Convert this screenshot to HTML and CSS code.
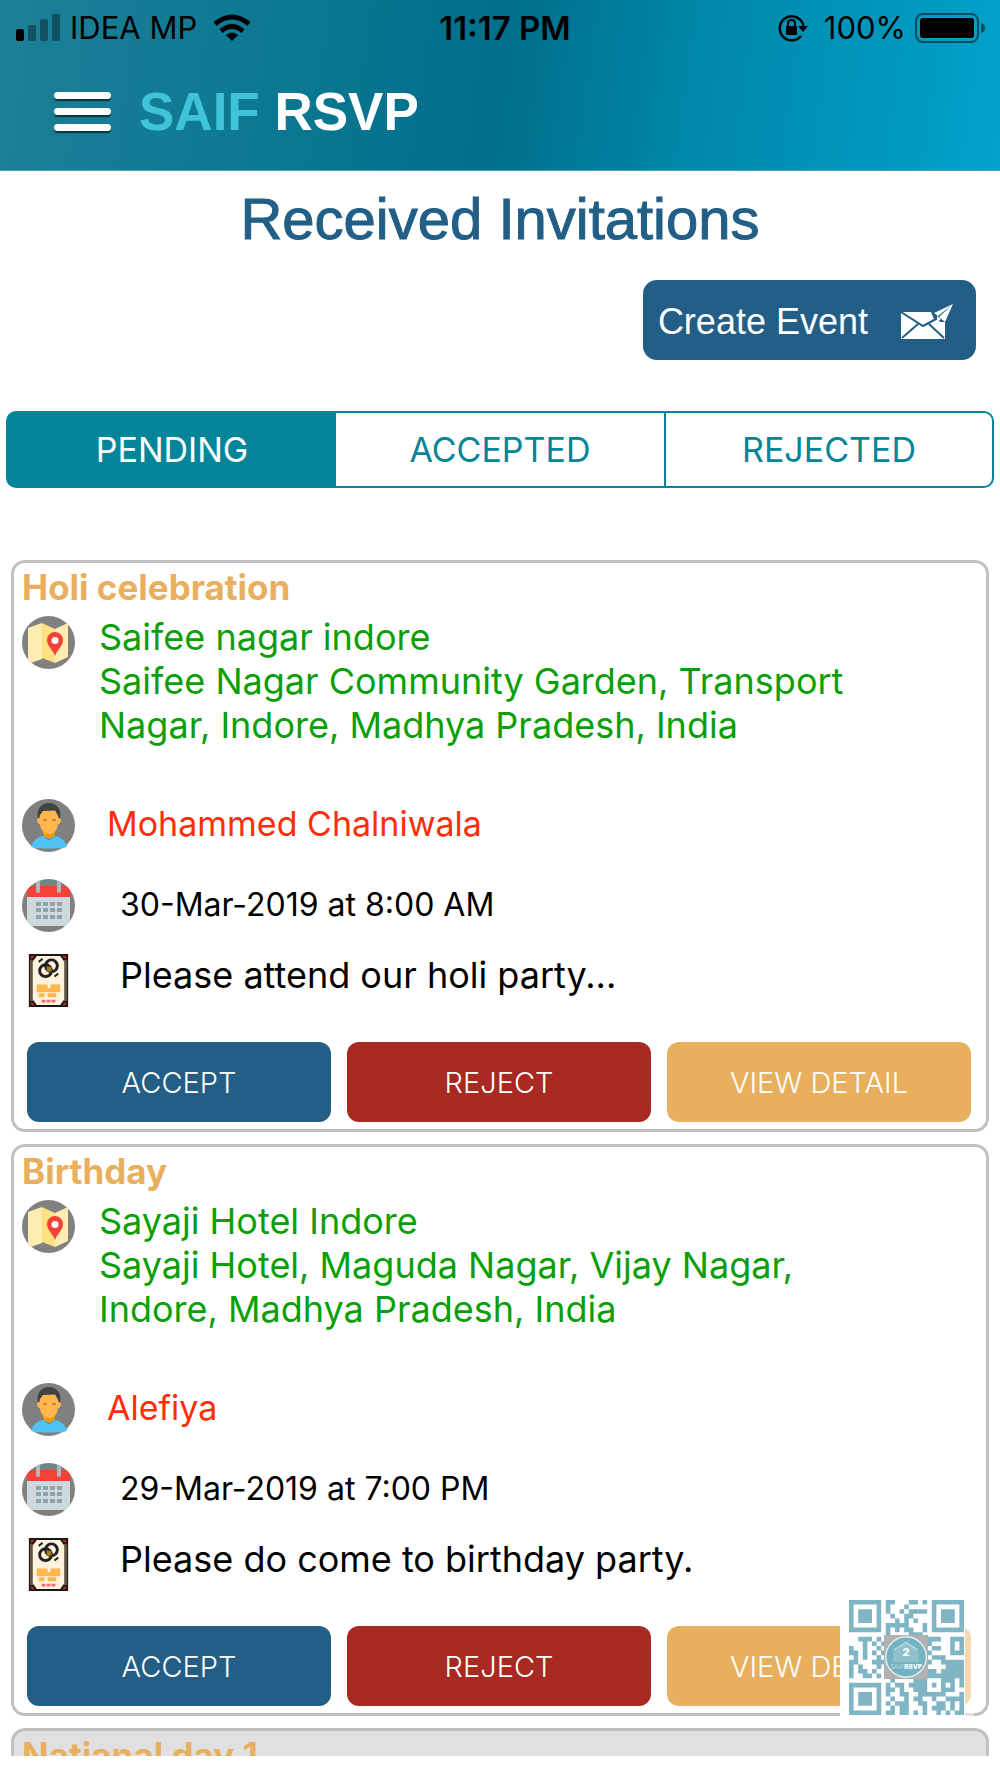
FILE: index.html
```html
<!DOCTYPE html>
<html lang="en">
<head>
<meta charset="UTF-8" />
<meta name="viewport" content="width=device-width, initial-scale=1" />
<title>SAIF RSVP</title>
<link rel="stylesheet" href="styles.css">
</head>
<body>
  <!-- Shared icons -->
  <svg class="sprite" aria-hidden="true">
    <symbol id="icon-map" viewBox="0 0 53 53">
      <clipPath id="map-clip"><circle cx="26.500" cy="26.500" r="26.500" /></clipPath>
      <g clip-path="url(#map-clip)">
        <rect width="53" height="53" fill="#808080" />
        <path d="M6 12l14-5v36L6 48z" fill="#ffecb3" />
        <path d="M20 7l13 6v34l-13-5z" fill="#ffe082" />
        <path d="M33 13l13-6v34l-13 6z" fill="#ffecb3" />
        <path d="M33 40c-2-6-8-10-8-16a8 8 0 0 1 16 0c0 6-6 10-8 16z" fill="#f44336" />
        <circle cx="33" cy="24.500" r="3.500" fill="#fff" />
      </g>
    </symbol>
    <symbol id="icon-person" viewBox="0 0 53 53">
      <circle cx="26.500" cy="26.500" r="26.500" fill="#808080" />
      <path d="M9 48c2-8 9-12 18-12s16 4 18 12c-5 2-31 2-36 0z" fill="#4fc3f7" />
      <path d="M19 36l8 5 8-5-3-2H22z" fill="#0288d1" />
      <path d="M21 30h12v7l-6 3-6-3z" fill="#ff9800" />
      <path d="M16 19h22c2 3 0 6-2 6 0 5-4 10-9 10s-9-5-9-10c-2 0-4-3-2-6z" fill="#ffb74d" />
      <path d="M18 20V12h18v8z" fill="#ffb74d" />
      <path d="M16 20C14 9 20 4 27 4s13 5 11 16l-3-5-2-4-12 1-3 4z" fill="#424242" />
      <path d="M21 21h4M30 21h4" stroke="#b9772f" stroke-width="1.500" />
    </symbol>
    <symbol id="icon-calendar" viewBox="0 0 53 53">
      <clipPath id="cal-clip"><circle cx="26.500" cy="26.500" r="26.500" /></clipPath>
      <g clip-path="url(#cal-clip)">
        <rect width="53" height="53" fill="#808080" />
        <rect x="5" y="7" width="43" height="40" rx="3" fill="#cfd8dc" />
        <path d="M5 18v-8q0-3 3-3h37q3 0 3 3v8z" fill="#f44336" />
        <path d="M16 3v9M37 3v9" stroke="#b0b8bd" stroke-width="4" stroke-linecap="round" />
        <path d="M14 25h26M14 31h26M14 38h26" stroke="#90a4ae" stroke-width="4" stroke-dasharray="5 2" />
      </g>
    </symbol>
    <symbol id="icon-card" viewBox="0 0 40 54">
      <rect width="40" height="54" fill="#1a1714" />
      <rect x="1" y="6" width="38" height="42" fill="#5d5744" />
      <path d="M8 2h24l4 6v38l-4 6H8l-4-6V8z" fill="#fff3e0" />
      <g fill="none" stroke="#222" stroke-width="3">
        <circle cx="17" cy="17" r="6" /><circle cx="23" cy="12" r="6" />
      </g>
      <path d="M18 13h5v5h-5z" fill="#a47c10" />
      <path d="M10 8l4-3M26 23l4-3" stroke="#222" stroke-width="2" />
      <path d="M8 33h11M22 33h10M8 37h24M10 42h6M19 42h9" stroke="#ffb74d" stroke-width="4" />
      <path d="M13 48h14" stroke="#e57373" stroke-width="3" stroke-dasharray="4 1" />
      <path d="M2 4l3-2M35 2l3 2M2 50l3 2M38 50l-3 2" stroke="#c62828" stroke-width="2" />
    </symbol>
  </svg>

  <header class="app-header">
    <div class="status-bar">
      <div class="status-left">
        <svg class="signal" viewBox="0 0 44 28" aria-hidden="true">
          <rect y="15" width="8" height="12" rx="2" />
          <g opacity=".35"><rect x="12" y="11" width="8" height="16" rx="2" /><rect x="24" y="5" width="8" height="22" rx="2" /><rect x="36" width="8" height="27" rx="2" /></g>
        </svg>
        <span class="carrier">IDEA MP</span>
        <svg class="wifi" viewBox="0 0 38 28" aria-hidden="true">
          <path d="M19 27l-6-6q6-5 12 0z" />
          <g fill="none" stroke="#000" stroke-width="5"><path d="M8 17q11-9 22 0M2 10q17-14 34 0" /></g>
        </svg>
      </div>
      <time class="clock">11:17 PM</time>
      <div class="status-right">
        <svg class="lock" viewBox="0 0 30 28" aria-hidden="true">
          <path d="M25.500 12A12 12 0 1 0 23 22" fill="none" stroke="#000" stroke-width="2.500" />
          <path d="M20 12h10l-5 6z" />
          <rect x="8" y="12" width="11" height="9" rx="1" />
          <path d="M10 13V9q0-3 3.500-3T17 9v4" fill="none" stroke="#000" stroke-width="2" />
        </svg>
        <span class="battery-text">100%</span>
        <svg class="battery" viewBox="0 0 71 32" aria-hidden="true">
          <rect x="1" y="2" width="62" height="28" rx="7" fill="none" stroke="#000" stroke-opacity=".5" stroke-width="2" />
          <rect x="5" y="6" width="54" height="20" rx="3" />
          <path d="M66 11q4 1 4 5t-4 5z" opacity=".5" />
        </svg>
      </div>
    </div>
    <div class="nav-bar">
      <button class="menu-btn" aria-label="Open menu"><span></span><span></span><span></span></button>
      <div class="brand"><span>SAIF</span> RSVP</div>
    </div>
  </header>

  <h1>Received Invitations</h1>

  <div class="toolbar">
    <button class="create-btn">
      Create Event
      <svg viewBox="0 0 53 36" aria-hidden="true">
        <path d="M1 8h30l3 7 7 3h4v17H1z" fill="#fff" />
        <path d="M1 8l22 14 13-7M2 34l16-14M44 34L29 20" fill="none" stroke="#225e85" stroke-width="2" />
        <path d="M53 0L34 9l4 3zM53 0L39 13l6 5z" fill="#fff" />
        <path d="M37 12v6l4-3z" fill="#fff" />
      </svg>
    </button>
  </div>

  <div class="tabs" role="tablist">
    <button class="tab active" role="tab" aria-selected="true">PENDING</button>
    <button class="tab" role="tab" aria-selected="false">ACCEPTED</button>
    <button class="tab" role="tab" aria-selected="false">REJECTED</button>
  </div>

  <main class="invite-list">
    <article class="invite">
      <h2>Holi celebration</h2>
      <div class="row venue">
        <svg class="icon"><use href="#icon-map" /></svg>
        <p>Saifee nagar indore<br>Saifee Nagar Community Garden, Transport Nagar, Indore, Madhya Pradesh, India</p>
      </div>
      <div class="row host">
        <svg class="icon"><use href="#icon-person" /></svg>
        <p>Mohammed Chalniwala</p>
      </div>
      <div class="row date">
        <svg class="icon"><use href="#icon-calendar" /></svg>
        <p>30-Mar-2019 at 8:00 AM</p>
      </div>
      <div class="row note">
        <svg class="icon"><use href="#icon-card" /></svg>
        <p>Please attend our holi party...</p>
      </div>
      <div class="actions">
        <button class="accept">ACCEPT</button>
        <button class="reject">REJECT</button>
        <button class="detail">VIEW DETAIL</button>
      </div>
    </article>

    <article class="invite">
      <h2>Birthday</h2>
      <div class="row venue">
        <svg class="icon"><use href="#icon-map" /></svg>
        <p>Sayaji Hotel Indore<br>Sayaji Hotel, Maguda Nagar, Vijay Nagar, Indore, Madhya Pradesh, India</p>
      </div>
      <div class="row host">
        <svg class="icon"><use href="#icon-person" /></svg>
        <p>Alefiya</p>
      </div>
      <div class="row date">
        <svg class="icon"><use href="#icon-calendar" /></svg>
        <p>29-Mar-2019 at 7:00 PM</p>
      </div>
      <div class="row note">
        <svg class="icon"><use href="#icon-card" /></svg>
        <p>Please do come to birthday party.</p>
      </div>
      <div class="actions">
        <button class="accept">ACCEPT</button>
        <button class="reject">REJECT</button>
        <button class="detail">VIEW DETAIL</button>
      </div>
    </article>

    <article class="invite read">
      <h2>Natianal day 1</h2>
    </article>
  </main>

  <!-- QR badge floats over the list -->
  <div class="qr-badge">
    <svg viewBox="0 0 250 250" role="img" aria-label="QR code">
      <g transform="scale(10)" fill="none" stroke="#7fb5c4">
        <path d="M.5 .5h6v6h-6zM18.500 .5h6v6h-6zM.5 18.500h6v6h-6z" />
        <path stroke-width="3" d="M2 3.500h3M20 3.500h3M2 21.500h3" />
        <path d="M8 .5h2M13 .5h2M16 .5h1M8 1.500h1M12 1.500h1M8 2.500h1M11 2.500h1M13 2.500h4M9 3.500h1M12 3.500h2M10 4.500h1M12 4.500h1M14 4.500h1M8 5.500h5M16 5.500h1M8 6.500h1M10 6.500h1M12 6.500h2M16 6.500h1M8 7.500h1M13 7.500h3
          M2 8.500h3M6 8.500h1M17 8.500h3M22 8.500h3M3 9.500h1M5 9.500h1M7 9.500h1M17 9.500h1M22 9.500h1M24 9.500h1M0 10.500h1M3 10.500h1M6 10.500h1M18 10.500h2M22 10.500h1M24 10.500h1M0 11.500h2M3 11.500h1M5 11.500h1M7 11.500h1M17 11.500h1M22 11.500h3M1 12.500h1M3 12.500h1M6 12.500h1M18 12.500h3M0 13.500h2M5 13.500h3M17 13.500h1M20 13.500h5M0 14.500h1M2 14.500h1M6 14.500h1M21 14.500h4M0 15.500h1M2 15.500h2M5 15.500h1M17 15.500h2M20 15.500h5M0 16.500h1M3 16.500h2M6 16.500h1M17 16.500h8M9 17.500h1M14 17.500h3M20 17.500h3M24 17.500h1
          M8 18.500h1M10 18.500h2M13 18.500h4M18 18.500h1M20 18.500h1M22 18.500h1M24 18.500h1M8 19.500h2M11 19.500h1M14 19.500h3M20 19.500h3M8 20.500h1M11 20.500h2M15 20.500h6M24 20.500h1M9 21.500h1M12 21.500h1M14 21.500h2M18 21.500h1M21 21.500h4M8 22.500h1M10 22.500h3M15 22.500h2M19 22.500h2M22 22.500h1M24 22.500h1M9 23.500h1M11 23.500h2M16 23.500h1M18 23.500h3M22 23.500h1M24 23.500h1M8 24.500h2M11 24.500h2M14 24.500h1M16 24.500h1M19 24.500h1M21 24.500h1M23 24.500h2" />
      </g>
      <rect x="76" y="76" width="96" height="96" fill="#b1b1b1" />
      <circle cx="124" cy="124" r="44" fill="#75b2c2" stroke="#e4f1f4" stroke-width="3" />
      <path d="M96 113l28-20 28 20v22H96z" fill="#91c1cd" />
      <path d="M98 109l26-17 26 17" fill="none" stroke="#b9d9e1" stroke-width="3" />
      <text x="124" y="122" class="qr-num">2</text>
      <text x="124" y="151" class="qr-name">SAIF<tspan>RSVP</tspan></text>
    </svg>
  </div>
</body>
</html>
```
FILE: styles.css
```css
/* Reset */
* {
  box-sizing: border-box;
  margin: 0;
  padding: 0;
}
body {
  background: #fff;
  color: #000;
  font-family: Inter, "Liberation Sans", sans-serif;
  height: 100vh;
  display: flex;
  flex-direction: column;
  padding-bottom: 22px;
}
button {
  border: none;
  font-family: inherit;
  cursor: pointer;
}
.sprite {
  position: absolute;
  width: 0;
  height: 0;
}

/* Header */
.app-header {
  flex-shrink: 0;
  height: 171px;
  background: linear-gradient(98deg, #1e7f98 0%, #0b7791 30%, #006f8b 50%, #0088aa 70%, #00a2cb 100%);
  border-bottom: 1px solid #4fa9bd;
}
.status-bar {
  height: 55px;
  padding: 0 14px 0 16px;
  display: grid;
  grid-template-columns: 1fr auto 1fr;
  align-items: center;
  font-size: 31px;
}
.status-left,
.status-right {
  display: flex;
  align-items: center;
}
.status-right {
  justify-content: flex-end;
}
.signal {
  width: 44px;
  height: 28px;
}
.carrier {
  margin: 0 16px 0 10px;
}
.wifi {
  width: 38px;
  height: 28px;
}
.clock {
  padding-left: 8px;
  font-size: 33px;
  font-weight: 600;
}
.lock {
  width: 30px;
  height: 28px;
}
.battery-text {
  margin: 0 9px 0 16px;
}
.battery {
  width: 71px;
  height: 32px;
}
.nav-bar {
  display: flex;
  align-items: center;
  gap: 28px;
  height: 112px;
  padding: 0 54px;
}
.menu-btn {
  background: none;
  width: 57px;
  display: flex;
  flex-direction: column;
  gap: 9px;
}
.menu-btn span {
  height: 7px;
  border-radius: 4px;
  background: #fff;
  box-shadow: 0 2px 1px rgba(0, 0, 0, 0.6);
}
.brand {
  font: bold 53px "Liberation Sans", Arial, sans-serif;
  color: #fff;
}
.brand span {
  color: #3ec3d8;
}

h1 {
  flex-shrink: 0;
  font: 58px/96px "Liberation Sans", Arial, sans-serif;
  color: #225e85;
  -webkit-text-stroke: 1px #225e85;
  text-align: center;
}

.toolbar {
  flex-shrink: 0;
  display: flex;
  justify-content: flex-end;
  padding: 13px 24px 51px;
}
.create-btn {
  display: flex;
  align-items: center;
  gap: 32px;
  height: 80px;
  padding: 3px 23px 0 15px;
  border-radius: 14px;
  background: #225e85;
  color: #fff;
  font: 36px "Liberation Sans", Arial, sans-serif;
}
.create-btn svg {
  width: 53px;
  height: 36px;
}

/* Tabs */
.tabs {
  flex-shrink: 0;
  display: grid;
  grid-template-columns: repeat(3, 1fr);
  height: 77px;
  margin: 0 6px 72px;
  border: 2px solid #04859a;
  border-radius: 10px;
  background: #04859a;
  overflow: hidden;
}
.tab {
  background: #fff;
  color: #04859a;
  font-size: 34px;
}
.tab:last-child {
  border-left: 2px solid #04859a;
}
.tab.active {
  background: #04859a;
  color: #fff;
}

/* Invitation cards */
.invite-list {
  flex: 1;
  min-height: 0;
  overflow-y: auto;
  scrollbar-width: none;
  padding: 0 11px;
}
.invite {
  margin-bottom: 12px;
  border: 3px solid #c0c0c0;
  border-radius: 14px;
  overflow: hidden;
}
.invite.read {
  background: #e0e0e0;
}
.invite h2 {
  padding-left: 8px;
  font-size: 35px;
  line-height: 48px;
  color: #e8b05e;
}
.row {
  display: flex;
  align-items: center;
  padding-left: 8px;
}
.icon {
  flex-shrink: 0;
  width: 53px;
  height: 53px;
}
.venue {
  align-items: flex-start;
  height: 188px;
  padding-top: 5px;
  padding-right: 90px;
  gap: 24px;
  font-size: 36px;
  line-height: 44px;
  color: #0a9f0a;
}
.venue p {
  margin-top: -1px;
}
.host {
  height: 53px;
  gap: 32px;
  font-size: 34px;
  line-height: 40px;
  color: #ff2d0a;
}
.host p,
.date p {
  padding-bottom: 3px;
}
.date {
  height: 80px;
  padding-top: 27px;
  gap: 45px;
  font-size: 32px;
}
.note {
  align-items: flex-start;
  height: 76px;
  padding-top: 22px;
  gap: 45px;
  font-size: 36px;
  line-height: 42px;
}
.actions {
  display: grid;
  grid-template-columns: repeat(3, 1fr);
  gap: 16px;
  padding: 34px 15px 7px 13px;
}
.actions button {
  height: 80px;
  border-radius: 12px;
  color: #fff;
  font-size: 29px;
  font-weight: 300;
}
.actions .accept {
  background: #225e85;
}
.actions .reject {
  background: #a82822;
}
.actions .detail {
  background: #e8b05e;
}

/* QR badge */
.qr-badge {
  position: fixed;
  right: 26px;
  bottom: 55px;
  width: 134px;
  height: 132px;
  padding: 9px;
  background: linear-gradient(to right, #fff 125px, rgba(255, 255, 255, 0.5) 125px);
}
.qr-badge svg {
  display: block;
  width: 115px;
  height: 115px;
}
.qr-num,
.qr-name {
  fill: #fff;
  text-anchor: middle;
  font-weight: 800;
  font-size: 24px;
}
.qr-name {
  fill: #b9d9e1;
  font-size: 14px;
  font-weight: 400;
}
.qr-name tspan {
  fill: #fff;
  font-weight: 800;
}
```
